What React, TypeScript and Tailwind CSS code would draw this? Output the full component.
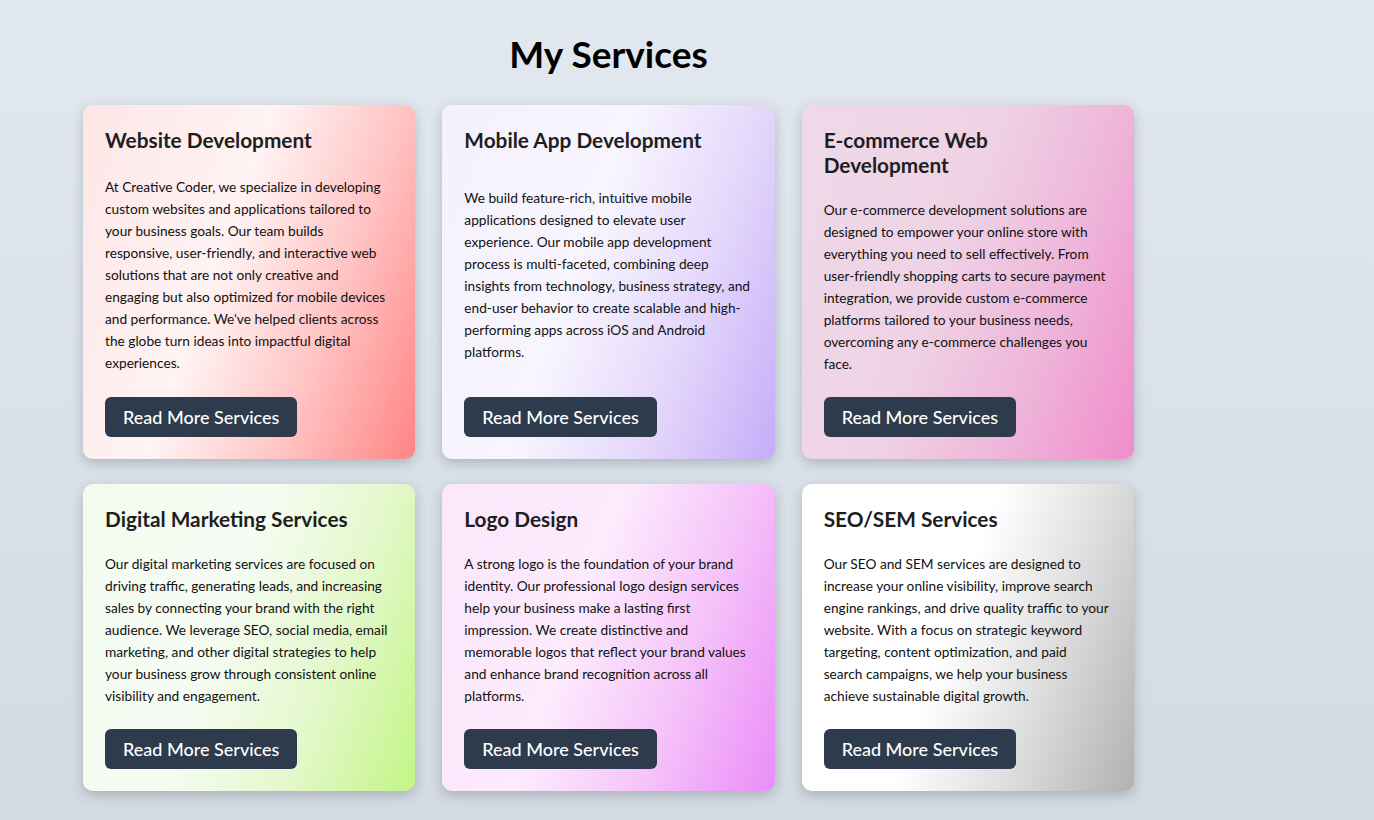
import React from "react";

type Service = {
  title: string;
  body: string;
  bg: string;
};

const services: Service[] = [
  {
    title: "Website Development",
    body: "At Creative Coder, we specialize in developing custom websites and applications tailored to your business goals. Our team builds responsive, user-friendly, and interactive web solutions that are not only creative and engaging but also optimized for mobile devices and performance. We've helped clients across the globe turn ideas into impactful digital experiences.",
    bg: "bg-[linear-gradient(110deg,#fde6e6_0%,#fff3f3_42%,#ffc4c4_70%,#ff8484_100%)]",
  },
  {
    title: "Mobile App Development",
    body: "We build feature-rich, intuitive mobile applications designed to elevate user experience. Our mobile app development process is multi-faceted, combining deep insights from technology, business strategy, and end-user behavior to create scalable and high-performing apps across iOS and Android platforms.",
    bg: "bg-[linear-gradient(110deg,#f4f1fc_0%,#f8f5fe_42%,#e4d8fb_70%,#c6acf8_100%)]",
  },
  {
    title: "E-commerce Web Development",
    body: "Our e-commerce development solutions are designed to empower your online store with everything you need to sell effectively. From user-friendly shopping carts to secure payment integration, we provide custom e-commerce platforms tailored to your business needs, overcoming any e-commerce challenges you face.",
    bg: "bg-[linear-gradient(110deg,#eed9e8_0%,#efd3e5_42%,#eeb6da_70%,#f08cca_100%)]",
  },
  {
    title: "Digital Marketing Services",
    body: "Our digital marketing services are focused on driving traffic, generating leads, and increasing sales by connecting your brand with the right audience. We leverage SEO, social media, email marketing, and other digital strategies to help your business grow through consistent online visibility and engagement.",
    bg: "bg-[linear-gradient(110deg,#f3fbef_0%,#f6fcf3_42%,#e4f8cc_70%,#c2f585_100%)]",
  },
  {
    title: "Logo Design",
    body: "A strong logo is the foundation of your brand identity. Our professional logo design services help your business make a lasting first impression. We create distinctive and memorable logos that reflect your brand values and enhance brand recognition across all platforms.",
    bg: "bg-[linear-gradient(110deg,#fbe6fa_0%,#fdeafd_42%,#f5c3f9_70%,#ea8cf8_100%)]",
  },
  {
    title: "SEO/SEM Services",
    // line break kept where the original wraps
    body: "Our SEO and SEM services are designed to increase your online visibility, improve search engine rankings, and drive quality traffic to your website. With a focus on strategic keyword targeting, content optimization, and paid\nsearch campaigns, we help your business achieve sustainable digital growth.",
    bg: "bg-[linear-gradient(110deg,#ffffff_0%,#ffffff_45%,#dedede_70%,#b1b1b1_100%)]",
  },
];

function ServiceCard({ s }: { s: Service }) {
  return (
    <div
      className={`flex flex-col justify-between gap-[22px] rounded-[10px] p-[22px] shadow-[0_4px_12px_rgba(60,70,80,0.28)] ${s.bg}`}
    >
      <h3 className="text-[20.8px] font-bold leading-[25px] text-[#1e1e1e]">{s.title}</h3>
      <p className="whitespace-pre-line text-[13.7px] leading-[22px] text-[#111]">{s.body}</p>
      <div>
        <button className="h-10 rounded-md bg-[#2d3b4d] px-[18px] text-[18px] font-medium text-white">
          Read More Services
        </button>
      </div>
    </div>
  );
}

export default function App() {
  return (
    <div className="min-h-[820px] bg-[linear-gradient(180deg,#e2e8ef_0%,#d3dae2_100%)] pt-[32px] pb-10 font-['Lato',sans-serif]">
      <div className="ml-[83px] w-[1051px]">
        <h2 className="mb-[29px] text-center text-[37px] font-bold leading-[44px] text-black">
          My Services
        </h2>
        <div className="grid grid-cols-3 gap-x-[27px] gap-y-[25px]">
          {services.map((s) => (
            <ServiceCard key={s.title} s={s} />
          ))}
        </div>
      </div>
    </div>
  );
}
